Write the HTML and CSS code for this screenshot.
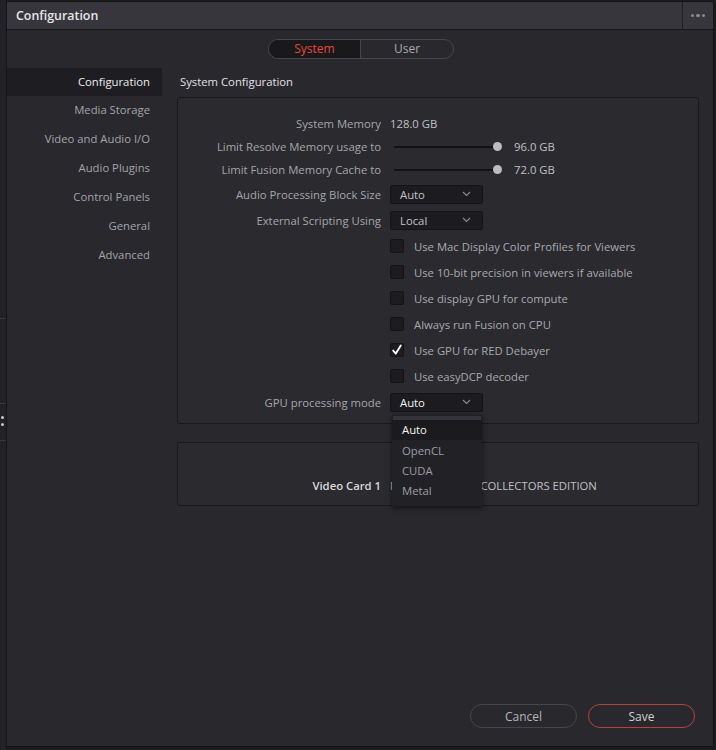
FILE: index.html
```html
<!DOCTYPE html>
<html>
<head>
<meta charset="utf-8">
<link rel="stylesheet" href="styles.css">
</head>
<body>
<div class="page">
  <div class="edge">
    <div class="edge-line l1"></div>
    <div class="edge-line l2"></div>
    <div class="edge-dots"><span></span><span></span></div>
    <div class="edge-line l3"></div>
  </div>
  <div class="dialog">
    <div class="titlebar">
      <div class="title">Configuration</div>
      <div class="more"><span></span><span></span><span></span></div>
    </div>
    <div class="body">
      <div class="seg-wrap">
        <div class="seg">
          <div class="seg-item active">System</div>
          <div class="seg-item">User</div>
        </div>
      </div>
      <div class="main">
        <div class="sidebar">
          <div class="nav active">Configuration</div>
          <div class="nav">Media Storage</div>
          <div class="nav">Video and Audio I/O</div>
          <div class="nav">Audio Plugins</div>
          <div class="nav">Control Panels</div>
          <div class="nav">General</div>
          <div class="nav">Advanced</div>
        </div>
        <div class="pane">
          <div class="heading">System Configuration</div>
          <div class="panel">
            <div class="row short">
              <div class="label">System Memory</div>
              <div class="ctrl value">128.0 GB</div>
            </div>
            <div class="row short">
              <div class="label">Limit Resolve Memory usage to</div>
              <div class="ctrl"><div class="slider"><div class="knob"></div></div><span class="value">96.0 GB</span></div>
            </div>
            <div class="row short">
              <div class="label">Limit Fusion Memory Cache to</div>
              <div class="ctrl"><div class="slider"><div class="knob"></div></div><span class="value">72.0 GB</span></div>
            </div>
            <div class="row">
              <div class="label">Audio Processing Block Size</div>
              <div class="ctrl"><div class="select"><span>Auto</span><svg width="9" height="6" viewBox="0 0 9 6"><path d="M1 1 L4.5 4.5 L8 1" fill="none" stroke="#8a8a90" stroke-width="1.1"/></svg></div></div>
            </div>
            <div class="row">
              <div class="label">External Scripting Using</div>
              <div class="ctrl"><div class="select"><span>Local</span><svg width="9" height="6" viewBox="0 0 9 6"><path d="M1 1 L4.5 4.5 L8 1" fill="none" stroke="#8a8a90" stroke-width="1.1"/></svg></div></div>
            </div>
            <div class="row">
              <div class="label"></div>
              <div class="ctrl"><span class="cb"></span><span class="cb-label">Use Mac Display Color Profiles for Viewers</span></div>
            </div>
            <div class="row">
              <div class="label"></div>
              <div class="ctrl"><span class="cb"></span><span class="cb-label">Use 10-bit precision in viewers if available</span></div>
            </div>
            <div class="row">
              <div class="label"></div>
              <div class="ctrl"><span class="cb"></span><span class="cb-label">Use display GPU for compute</span></div>
            </div>
            <div class="row">
              <div class="label"></div>
              <div class="ctrl"><span class="cb"></span><span class="cb-label">Always run Fusion on CPU</span></div>
            </div>
            <div class="row">
              <div class="label"></div>
              <div class="ctrl"><span class="cb checked"><svg width="14" height="14" viewBox="0 0 14 14"><path d="M3.2 7.6 L5.8 10.6 L10.8 2.6" fill="none" stroke="#ffffff" stroke-width="1.9" stroke-linecap="round" stroke-linejoin="round"/></svg></span><span class="cb-label">Use GPU for RED Debayer</span></div>
            </div>
            <div class="row">
              <div class="label"></div>
              <div class="ctrl"><span class="cb"></span><span class="cb-label">Use easyDCP decoder</span></div>
            </div>
            <div class="row">
              <div class="label">GPU processing mode</div>
              <div class="ctrl">
                <div class="select open"><span class="bright">Auto</span><svg width="9" height="6" viewBox="0 0 9 6"><path d="M1 1 L4.5 4.5 L8 1" fill="none" stroke="#8a8a90" stroke-width="1.1"/></svg>
                  <div class="menu">
                    <div class="menu-top"></div>
                    <div class="menu-item sel">Auto</div>
                    <div class="menu-item">OpenCL</div>
                    <div class="menu-item">CUDA</div>
                    <div class="menu-item">Metal</div>
                  </div>
                </div>
              </div>
            </div>
          </div>
          <div class="panel card">
            <div class="row">
              <div class="label strong">Video Card 1</div>
              <div class="ctrl value">NVIDIA TITAN Xp COLLECTORS EDITION</div>
            </div>
          </div>
        </div>
      </div>
      <div class="footer">
        <button class="btn">Cancel</button>
        <button class="btn save">Save</button>
      </div>
    </div>
  </div>
</div>
</body>
</html>
```

FILE: styles.css
```css
* { box-sizing: border-box; }
html, body {
  margin: 0;
  padding: 0;
  background: #1c1c1f;
  width: 716px;
  height: 750px;
  overflow: hidden;
  font-family: "Open Sans", "Noto Sans", sans-serif;
  font-size: 11.3px;
}
.page {
  display: flex;
  height: 750px;
}
.edge {
  width: 6px;
  background: #222226;
  display: flex;
  flex-direction: column;
  padding-top: 318px;
}
.edge-line { height: 1px; background: #3a3a40; }
.edge-line.l1 { margin-bottom: 84px; }
.edge-line.l2 { margin-bottom: 12px; }
.edge-dots { display: flex; flex-direction: column; gap: 4px; margin-bottom: 14px; }
.edge-dots span { width: 3px; height: 3px; border-radius: 50%; background: #c8c8c8; margin-left: 1px; }

.dialog {
  width: 708px;
  height: 746px;
  margin-top: 1px;
  background: #28282d;
  border: 1px solid #141416;
  display: flex;
  flex-direction: column;
}
.titlebar {
  height: 28px;
  flex: none;
  background: #36363c;
  border-bottom: 1px solid #17171a;
  display: flex;
  align-items: stretch;
}
.title {
  flex: 1;
  color: #e6e6e8;
  font-weight: 600;
  font-size: 12.4px;
  padding-left: 9px;
  line-height: 27px;
}
.more {
  width: 31px;
  border-left: 1px solid #1e1e21;
  display: flex;
  align-items: center;
  justify-content: center;
  gap: 2px;
}
.more span { width: 3.5px; height: 3.5px; border-radius: 50%; background: #88888e; }

.body {
  flex: 1;
  display: flex;
  flex-direction: column;
}
.seg-wrap {
  display: flex;
  justify-content: center;
  padding-top: 9px;
}
.seg {
  display: flex;
  height: 20px;
  border: 1px solid #46464c;
  border-radius: 10px;
  overflow: hidden;
  margin-left: 2px;
}
.seg-item {
  width: 92px;
  text-align: center;
  line-height: 18px;
  font-size: 12px;
  color: #a9a9ae;
}
.seg-item.active {
  background: #19191c;
  color: #e5463b;
  border-right: 1px solid #46464c;
}

.main {
  display: flex;
  margin-top: 9px;
  flex: 1;
}
.sidebar {
  width: 155px;
  flex: none;
}
.nav {
  height: 29px;
  line-height: 28px;
  text-align: right;
  padding-right: 12px;
  color: #a4a4a9;
}
.nav.active {
  background: #1e1e22;
  color: #ececee;
  height: 28px;
}
.pane {
  flex: 1;
  padding-left: 15px;
  padding-right: 14px;
}
.heading {
  height: 29px;
  line-height: 28px;
  padding-left: 3px;
  color: #e2e2e4;
}
.panel {
  border: 1px solid #19191c;
  border-radius: 3px;
  background: #2a2a2f;
  padding: 14px 0 8px;
}
.row {
  display: flex;
  align-items: center;
  height: 26px;
}
.row.short { height: 23px; }
.label {
  width: 203px;
  flex: none;
  text-align: right;
  color: #a6a6ab;
}
.label.strong { color: #d8d8da; font-weight: 600; }
.ctrl {
  margin-left: 9px;
  display: flex;
  align-items: center;
  color: #b9b9bd;
}
.value { color: #c0c0c4; }
.slider {
  width: 104px;
  height: 2px;
  margin-left: 4px;
  background: #121214;
  position: relative;
  margin-right: 16px;
}
.knob {
  position: absolute;
  right: -4px;
  top: -4px;
  width: 9px;
  height: 9px;
  border-radius: 50%;
  background: #bdbdc0;
}
.select {
  width: 93px;
  height: 19px;
  background: #1c1c20;
  border: 1px solid #141416;
  border-radius: 2px;
  display: flex;
  align-items: center;
  justify-content: space-between;
  padding: 0 11px 0 9px;
  color: #c2c2c6;
  position: relative;
}
.select .bright { color: #f2f2f4; }
.cb {
  width: 14px;
  height: 14px;
  background: #1d1d21;
  border: 1px solid #131315;
  border-radius: 2px;
  flex: none;
  display: flex;
}
.cb svg { margin: -1px; }
.cb-label {
  margin-left: 10px;
  color: #a9a9ae;
}
.menu {
  position: absolute;
  left: 1px;
  top: 20px;
  width: 90px;
  height: 92px;
  background: #222226;
  box-shadow: 0 2px 5px rgba(0,0,0,0.5);
  z-index: 5;
  padding-top: 2px;
}
.menu-top {
  height: 4px;
  margin: 0 1px;
  background: #34343a;
}
.menu-item {
  height: 20px;
  line-height: 20px;
  padding-left: 10px;
  color: #9d9da2;
}
.menu-item.sel {
  background: #1b1b1e;
  color: #f2f2f4;
  margin-bottom: 1px;
}
.card {
  margin-top: 18px;
  height: 64px;
  padding: 29px 0 0;
}
.footer {
  display: flex;
  justify-content: flex-end;
  gap: 11px;
  padding: 0 18px 18px 0;
}
.btn {
  width: 107px;
  height: 24px;
  border-radius: 12px;
  background: transparent;
  border: 1px solid #45454b;
  color: #b4b4b8;
  font-family: "Open Sans", "Noto Sans", sans-serif;
  font-size: 12px;
  padding: 0;
}
.btn.save {
  border-color: #b8423a;
  color: #cfcfd2;
}
```
